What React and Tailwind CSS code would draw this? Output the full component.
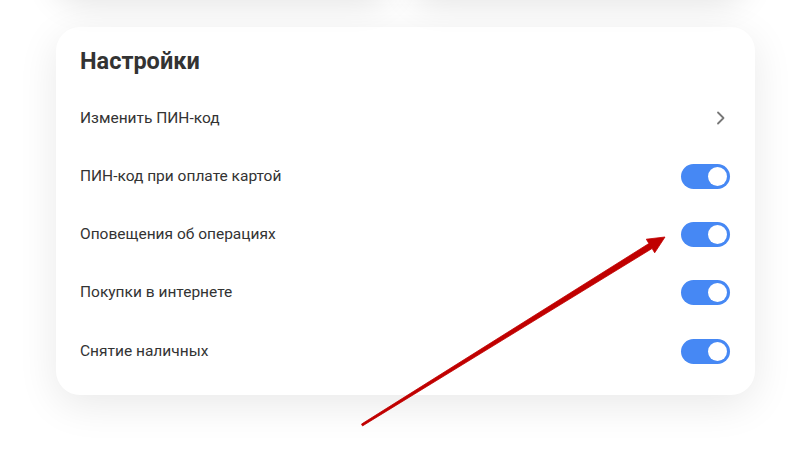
import React, { useState } from "react";

const rows = [
  { label: "Изменить ПИН-код", type: "link" },
  { label: "ПИН-код при оплате картой", type: "toggle" },
  { label: "Оповещения об операциях", type: "toggle" },
  { label: "Покупки в интернете", type: "toggle" },
  { label: "Снятие наличных", type: "toggle" },
];

function Toggle({ on, onClick }) {
  return (
    <button
      onClick={onClick}
      className={`w-[49px] h-[25px] rounded-full flex items-center px-[3px] ${on ? "bg-[#4688f4] justify-end" : "bg-[#d0d0d0] justify-start"}`}
    >
      <span className="w-[19px] h-[19px] rounded-full bg-white block" />
    </button>
  );
}

export default function App() {
  const [states, setStates] = useState({ 1: true, 2: true, 3: true, 4: true });

  return (
    <div
      className="relative w-[800px] h-[468px] overflow-hidden bg-white"
      style={{ fontFamily: "Roboto, 'Liberation Sans', sans-serif" }}
    >
      {/* cards above, only their shadow is visible */}
      <div className="flex gap-[20px] px-[56px] -mt-[124px] h-[112px]">
        <div className="flex-1 bg-white rounded-[24px] shadow-[0_14px_34px_rgba(0,0,0,0.12)]" />
        <div className="flex-1 bg-white rounded-[24px] shadow-[0_14px_34px_rgba(0,0,0,0.12)]" />
      </div>

      <div className="mx-[56px] mt-[39px] w-[699px] h-[368px] bg-white rounded-[24px] shadow-[0_10px_40px_rgba(0,0,0,0.09)] pl-[24px] pr-[25px] pt-[19px]">
        <h2 className="text-[23.5px] font-bold text-[#333] leading-[30px]">Настройки</h2>
        <div className="mt-[13px] flex flex-col">
          {rows.map((r, i) => (
            <div key={i} className="h-[58.25px] flex items-center justify-between">
              <span className="text-[15.5px] text-[#333]">{r.label}</span>
              {r.type === "link" ? (
                <svg width="12" height="14" viewBox="0 0 12 14" fill="none" className="mr-[3px]">
                  <path d="M3 1.5 L8.5 7 L3 12.5" stroke="#777" strokeWidth="1.8" strokeLinecap="round" strokeLinejoin="round" />
                </svg>
              ) : (
                <Toggle on={states[i]} onClick={() => setStates((p) => ({ ...p, [i]: !p[i] }))} />
              )}
            </div>
          ))}
        </div>
      </div>

      {/* annotation arrow */}
      <svg className="absolute left-0 top-0 pointer-events-none" width="800" height="468" viewBox="0 0 800 468">
        <polygon
          points="361.5,424.1 648.9,243.5 646.3,239.2 665,237 654.7,252.8 652.1,248.5 362.5,425.9"
          fill="#c00000"
          stroke="#c00000"
          strokeWidth="0.8"
          strokeLinejoin="round"
        />
      </svg>
    </div>
  );
}
